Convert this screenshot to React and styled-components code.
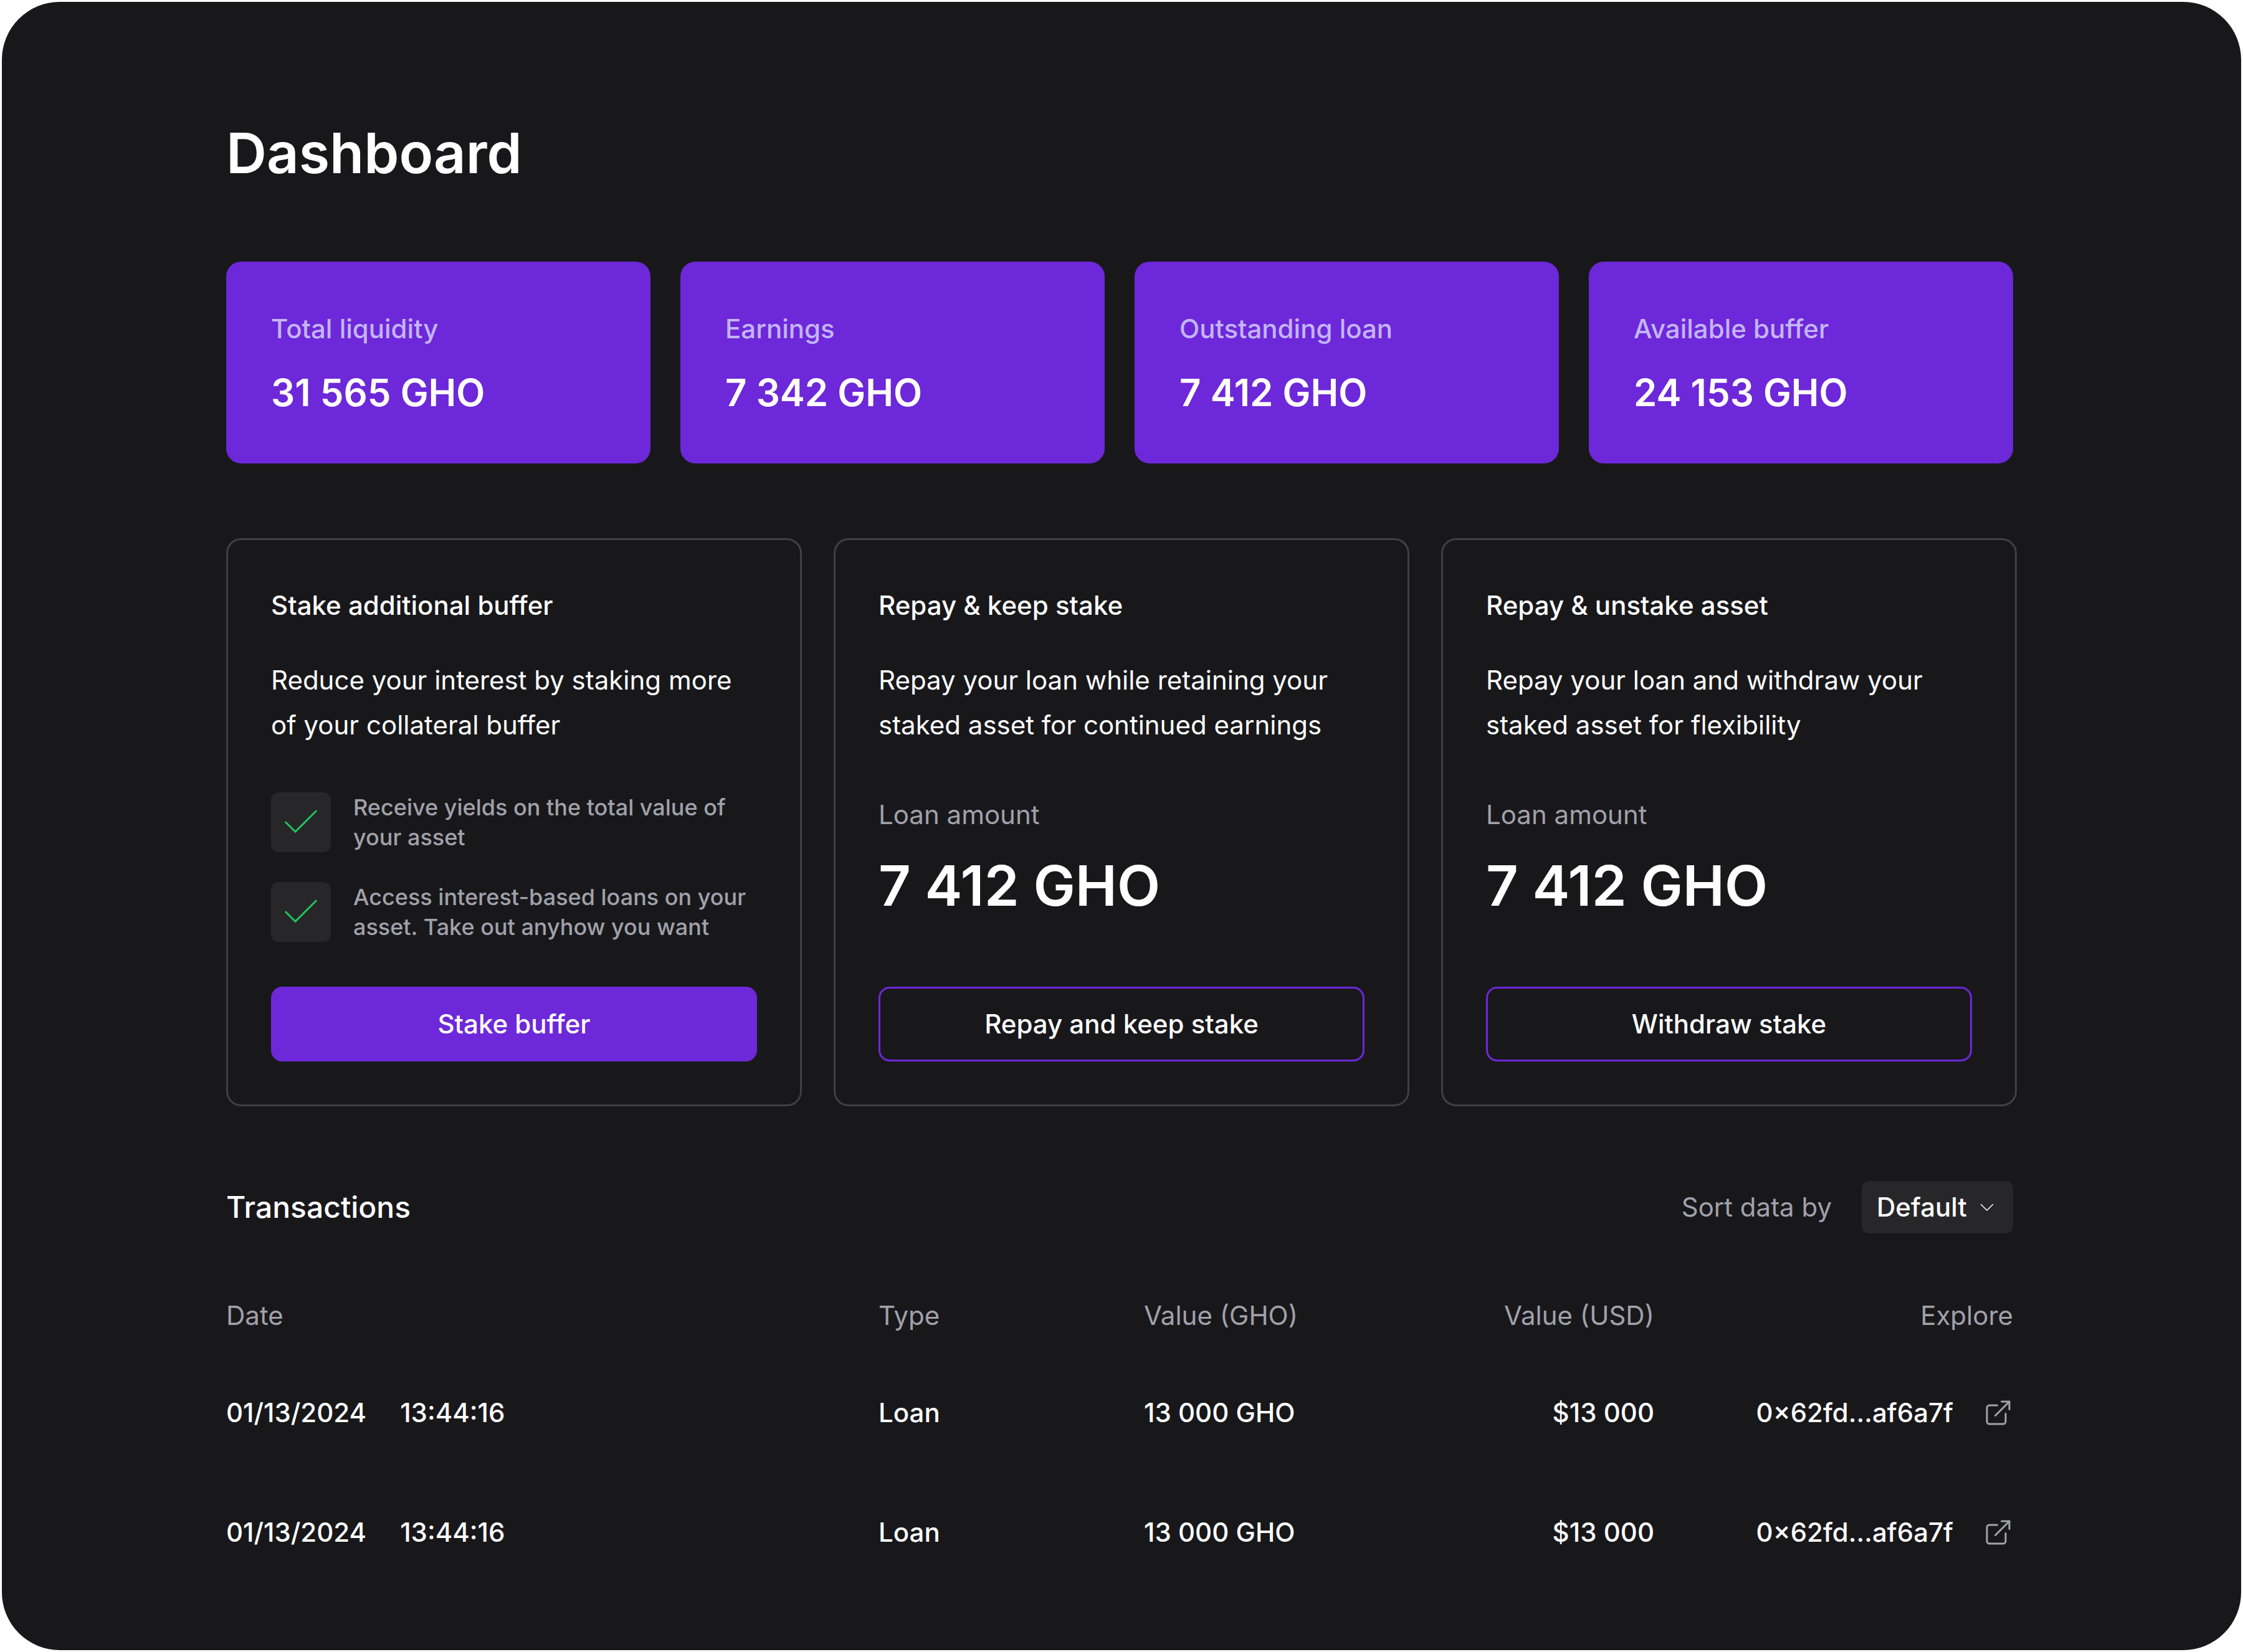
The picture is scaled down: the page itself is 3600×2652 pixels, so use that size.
import React from "react";
import styled, { createGlobalStyle } from "styled-components";

const GlobalStyle = createGlobalStyle`
  *, *::before, *::after { box-sizing: border-box; }
  body {
    margin: 0;
    background: #ffffff;
    color: #ffffff;
    font-family: Inter, "Liberation Sans", sans-serif;
    font-size: 42px;
    line-height: 72px;
    -webkit-font-smoothing: antialiased;
  }
  h1, h2, h3, p, dl, dt, dd, ul { margin: 0; padding: 0; }
`;

const Panel = styled.main`
  margin: 3px;
  padding: 189px 366px 93px 360px;
  border-radius: 93px;
  background: #18181b;
`;

const PageTitle = styled.h1`
  font-size: 90px;
  line-height: 108px;
  font-weight: 600;
`;

const StatGrid = styled.dl`
  display: grid;
  grid-template-columns: repeat(4, 1fr);
  gap: 48px;
  margin-top: 120px;
`;

const StatCard = styled.div`
  display: flex;
  flex-direction: column;
  gap: 24px;
  padding: 72px;
  border-radius: 24px;
  background: #6d28d9;
`;

const StatLabel = styled.dt`
  color: #c4b5fd;
  font-weight: 500;
`;

const StatValue = styled.dd`
  font-size: 60px;
  line-height: 84px;
  font-weight: 600;
`;

const ActionGrid = styled.section`
  display: grid;
  grid-template-columns: repeat(3, 1fr);
  gap: 51px;
  margin: 120px -6px 0 0;
`;

const ActionCard = styled.article`
  display: flex;
  flex-direction: column;
  padding: 69px;
  border: 3px solid #3f3f46;
  border-radius: 24px;
`;

const ActionTitle = styled.h2`
  font-size: 42px;
  line-height: 72px;
  font-weight: 500;
`;

const Description = styled.p`
  margin-top: 48px;
  font-weight: 400;
`;

const Benefits = styled.ul`
  display: flex;
  flex-direction: column;
  gap: 48px;
  margin: 72px 0;
  list-style: none;
`;

const Benefit = styled.li`
  display: flex;
  gap: 36px;
  color: #a1a1aa;
  font-size: 36px;
  line-height: 48px;
  font-weight: 500;
`;

const TickBox = styled.span`
  flex: none;
  width: 96px;
  height: 96px;
  border-radius: 12px;
  background: #27272a;
  color: #22c55e;

  svg { display: block; }
`;

const Loan = styled.div`
  display: flex;
  flex-direction: column;
  gap: 24px;
  margin: 72px 0;
`;

const LoanLabel = styled.p`
  color: #a1a1aa;
  font-weight: 400;
`;

const LoanAmount = styled.p`
  font-size: 90px;
  line-height: 108px;
  font-weight: 600;
`;

const ActionButton = styled.button`
  height: 120px;
  margin-top: auto;
  border: 3px solid #6d28d9;
  border-radius: 18px;
  background: ${({ $filled }) => ($filled ? "#6d28d9" : "transparent")};
  color: inherit;
  font: inherit;
  font-weight: 500;
  cursor: pointer;
`;

const Toolbar = styled.header`
  display: flex;
  align-items: center;
  justify-content: space-between;
  margin-top: 120px;
`;

const SectionTitle = styled.h2`
  font-size: 48px;
  line-height: 72px;
  font-weight: 500;
`;

const Sort = styled.div`
  display: flex;
  align-items: center;
  gap: 48px;
  color: #a1a1aa;
  font-weight: 400;
`;

const SelectBox = styled.div`
  display: grid;
  align-items: center;
  width: 243px;
  border-radius: 12px;
  background: #27272a;
  color: #ffffff;

  select, svg { grid-area: 1 / 1; }
  svg {
    justify-self: end;
    margin-right: 24px;
    pointer-events: none;
  }
`;

const Select = styled.select`
  appearance: none;
  width: 100%;
  height: 84px;
  padding: 0 24px;
  border: 0;
  border-radius: 12px;
  background: transparent;
  color: inherit;
  font: inherit;
  font-weight: 500;
`;

const Table = styled.table`
  width: 100%;
  margin-top: 96px;
  table-layout: fixed;
  border-collapse: collapse;
  text-align: left;
`;

const Col = styled.col`
  width: ${({ $width }) => ($width ? `${$width}px` : "auto")};
`;

const HeadCell = styled.th`
  padding: 0 0 24px;
  color: #a1a1aa;
  font-weight: 400;
  text-align: ${({ $align }) => $align || "left"};
`;

const Cell = styled.td`
  padding: 60px 0;
  font-weight: 500;
  text-align: ${({ $align }) => $align || "left"};
`;

const Moment = styled.div`
  display: flex;
  gap: 54px;
`;

const TxLink = styled.a`
  display: flex;
  align-items: center;
  justify-content: flex-end;
  gap: 48px;
  color: inherit;
  text-decoration: none;

  svg { flex: none; color: #a1a1aa; }
`;

const TickIcon = () => (
  <svg width="96" height="96" viewBox="0 0 96 96" fill="none" stroke="currentColor" strokeWidth="3" strokeLinecap="round" strokeLinejoin="round" aria-hidden="true">
    <path d="M23.7 48 39 63.3 72.3 30" />
  </svg>
);

const ChevronIcon = () => (
  <svg width="36" height="36" viewBox="0 0 36 36" fill="none" stroke="currentColor" strokeWidth="1.5" strokeLinecap="round" strokeLinejoin="round" aria-hidden="true">
    <path d="m8.5 13.5 9.5 9.5 9.5-9.5" />
  </svg>
);

const ExternalIcon = () => (
  <svg width="48" height="48" viewBox="0 0 48 48" fill="none" stroke="currentColor" strokeWidth="3" strokeLinecap="round" strokeLinejoin="round" aria-hidden="true">
    <path d="M22.5 12H10a4 4 0 0 0-4 4v22a4 4 0 0 0 4 4h22a4 4 0 0 0 4-4V25.5" />
    <path d="M19.5 28.5 42 6" />
    <path d="M29.5 6H42v12.5" />
  </svg>
);

const stats = [
  ["Total liquidity", "31 565 GHO"],
  ["Earnings", "7 342 GHO"],
  ["Outstanding loan", "7 412 GHO"],
  ["Available buffer", "24 153 GHO"],
];

const benefits = [
  "Receive yields on the total value of your asset",
  "Access interest-based loans on your asset. Take out anyhow you want",
];

const loanActions = [
  {
    title: "Repay & keep stake",
    text: "Repay your loan while retaining your staked asset for continued earnings",
    amount: "7 412 GHO",
    button: "Repay and keep stake",
  },
  {
    title: "Repay & unstake asset",
    text: "Repay your loan and withdraw your staked asset for flexibility",
    amount: "7 412 GHO",
    button: "Withdraw stake",
  },
];

const transactions = [
  { id: 1, date: "01/13/2024", time: "13:44:16", type: "Loan", gho: "13 000 GHO", usd: "$13 000", hash: "0×62fd...af6a7f" },
  { id: 2, date: "01/13/2024", time: "13:44:16", type: "Loan", gho: "13 000 GHO", usd: "$13 000", hash: "0×62fd...af6a7f" },
];

export default function App() {
  return (
    <>
      <GlobalStyle />
      <Panel>
        <PageTitle>Dashboard</PageTitle>

        <StatGrid>
          {stats.map(([label, value]) => (
            <StatCard key={label}>
              <StatLabel>{label}</StatLabel>
              <StatValue>{value}</StatValue>
            </StatCard>
          ))}
        </StatGrid>

        <ActionGrid>
          <ActionCard>
            <ActionTitle>Stake additional buffer</ActionTitle>
            <Description>Reduce your interest by staking more of your collateral buffer</Description>
            <Benefits>
              {benefits.map((text) => (
                <Benefit key={text}>
                  <TickBox><TickIcon /></TickBox>
                  <span>{text}</span>
                </Benefit>
              ))}
            </Benefits>
            <ActionButton type="button" $filled>Stake buffer</ActionButton>
          </ActionCard>
          {loanActions.map((action) => (
            <ActionCard key={action.title}>
              <ActionTitle>{action.title}</ActionTitle>
              <Description>{action.text}</Description>
              <Loan>
                <LoanLabel>Loan amount</LoanLabel>
                <LoanAmount>{action.amount}</LoanAmount>
              </Loan>
              <ActionButton type="button">{action.button}</ActionButton>
            </ActionCard>
          ))}
        </ActionGrid>

        <section>
          <Toolbar>
            <SectionTitle>Transactions</SectionTitle>
            <Sort>
              <label htmlFor="sort">Sort data by</label>
              <SelectBox>
                <Select id="sort" defaultValue="default">
                  <option value="default">Default</option>
                </Select>
                <ChevronIcon />
              </SelectBox>
            </Sort>
          </Toolbar>

          <Table>
            <colgroup>
              <Col />
              <Col $width={426} />
              <Col $width={408} />
              <Col $width={411} />
              <Col $width={576} />
            </colgroup>
            <thead>
              <tr>
                <HeadCell scope="col">Date</HeadCell>
                <HeadCell scope="col">Type</HeadCell>
                <HeadCell scope="col">Value (GHO)</HeadCell>
                <HeadCell scope="col" $align="right">Value (USD)</HeadCell>
                <HeadCell scope="col" $align="right">Explore</HeadCell>
              </tr>
            </thead>
            <tbody>
              {transactions.map((tx) => (
                <tr key={tx.id}>
                  <Cell>
                    <Moment>
                      <span>{tx.date}</span>
                      <span>{tx.time}</span>
                    </Moment>
                  </Cell>
                  <Cell>{tx.type}</Cell>
                  <Cell>{tx.gho}</Cell>
                  <Cell $align="right">{tx.usd}</Cell>
                  <Cell>
                    <TxLink href="#transaction">
                      {tx.hash}
                      <ExternalIcon />
                    </TxLink>
                  </Cell>
                </tr>
              ))}
            </tbody>
          </Table>
        </section>
      </Panel>
    </>
  );
}
